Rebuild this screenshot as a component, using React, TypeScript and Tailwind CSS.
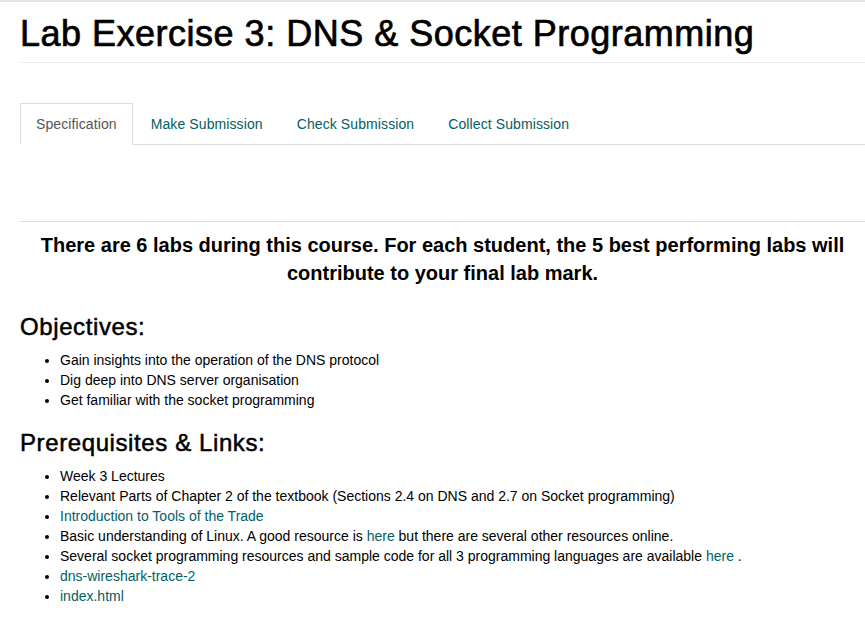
const linkCls = "text-[#006064] hover:underline"

export default function App() {
    return (
        <div className="min-h-screen bg-white text-black" style={{ fontFamily: '"Liberation Sans", Arial, sans-serif' }}>
            <div className="h-[2px] bg-[#e2e2e2]" />
            <div className="pl-[20px]">
                <h1 className="mt-[12px] pb-[8px] border-b border-[#eeeeee] text-[36px] leading-[40px] font-normal tracking-[0.5px] [-webkit-text-stroke:0.7px_black]">
                    Lab Exercise 3: DNS &amp; Socket Programming
                </h1>

                <ul className="mt-[40px] flex border-b border-[#dddddd] text-[14px] leading-[20px] tracking-[0.1px]">
                    <li className="-mb-px mr-[2px]">
                        <a className="block px-[15px] py-[10px] border border-[#dddddd] border-b-white bg-white text-[#555555] cursor-default">
                            Specification
                        </a>
                    </li>
                    {["Make Submission", "Check Submission", "Collect Submission"].map((t) => (
                        <li key={t} className="-mb-px mr-[2px]">
                            <a href="#" className="block px-[15px] py-[10px] border border-transparent text-[#006064]">
                                {t}
                            </a>
                        </li>
                    ))}
                </ul>

                <div className="h-[76px]" />
                <hr className="border-0 border-t border-[#dddddd]" />

                <p className="mt-[9px] text-center text-[20px] leading-[28px] font-bold">
                    There are 6 labs during this course. For each student, the 5 best performing labs will
                    <br />
                    contribute to your final lab mark.
                </p>

                <h3 className="mt-[27px] mb-[10px] text-[24px] leading-[26px] font-normal tracking-[0.6px] [-webkit-text-stroke:0.5px_black]">Objectives:</h3>
                <ul className="list-disc pl-[40px] text-[14px] leading-[20px] mb-[20px]">
                    <li>Gain insights into the operation of the DNS protocol</li>
                    <li>Dig deep into DNS server organisation</li>
                    <li>Get familiar with the socket programming</li>
                </ul>

                <h3 className="mb-[10px] text-[24px] leading-[26px] font-normal tracking-[0.6px] [-webkit-text-stroke:0.5px_black]">Prerequisites &amp; Links:</h3>
                <ul className="list-disc pl-[40px] text-[14px] leading-[20px] mb-[10px]">
                    <li>Week 3 Lectures</li>
                    <li>Relevant Parts of Chapter 2 of the textbook (Sections 2.4 on DNS and 2.7 on Socket programming)</li>
                    <li><a href="#" className={linkCls}>Introduction to Tools of the Trade</a></li>
                    <li>
                        Basic understanding of Linux. A good resource is <a href="#" className={linkCls}>here</a> but there are several other resources online.
                    </li>
                    <li>
                        Several socket programming resources and sample code for all 3 programming languages are available <a href="#" className={linkCls}>here</a> .
                    </li>
                    <li><a href="#" className={linkCls}>dns-wireshark-trace-2</a></li>
                    <li><a href="#" className={linkCls}>index.html</a></li>
                </ul>
            </div>
        </div>
    )
}
